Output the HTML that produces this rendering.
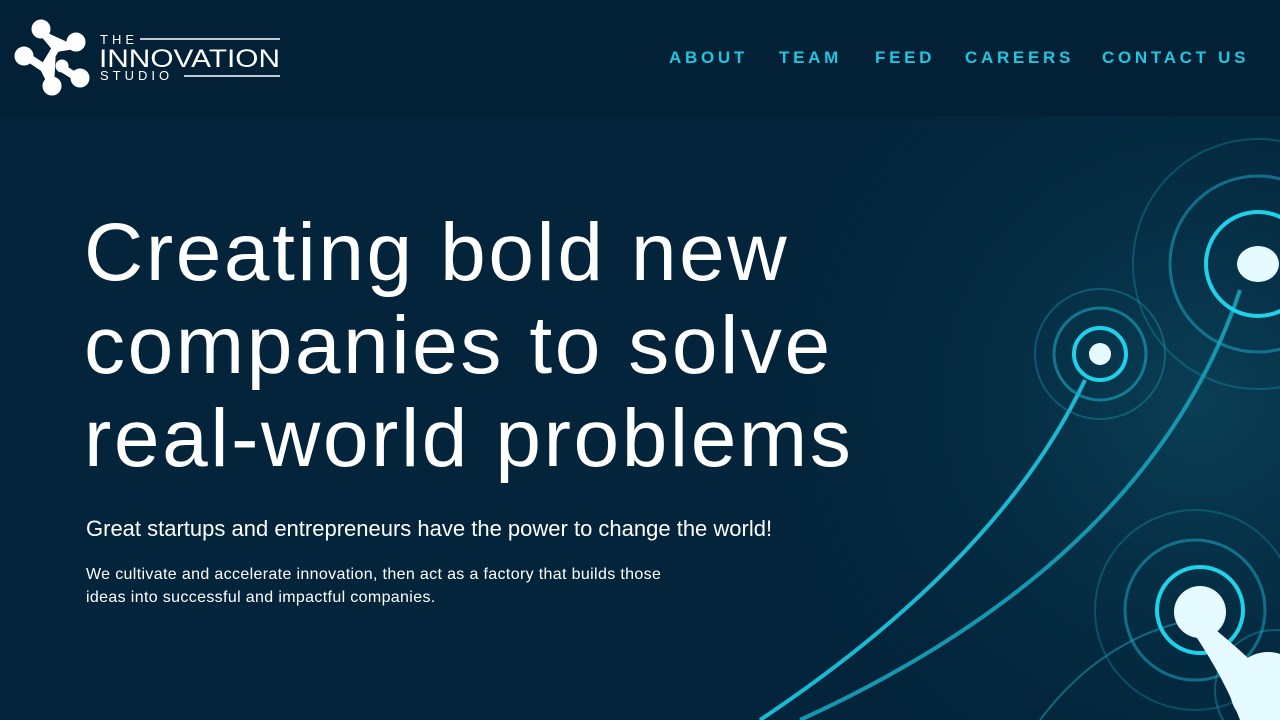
<!DOCTYPE html>
<html><head><meta charset="utf-8"><style>
*{margin:0;padding:0;box-sizing:border-box}
html,body{width:1280px;height:720px;overflow:hidden;background:#03243a;font-family:"Liberation Sans",sans-serif}
.hdr{position:absolute;left:0;top:0;width:1280px;height:116px;background:#022137}
.nav{position:absolute;top:48px;font-weight:bold;font-size:17px;letter-spacing:3.7px;color:#1fc6e0}
h1{position:absolute;left:84px;top:206px;font-weight:normal;font-size:82px;line-height:93px;color:#fff;letter-spacing:2.6px}
.sub{position:absolute;left:86px;top:516px;font-size:22px;color:#fff}
.p{position:absolute;left:86px;top:563px;font-size:16px;line-height:23px;color:#fff;width:640px;letter-spacing:0.35px}
svg{position:absolute}
</style></head><body>
<div class="hdr"></div>
<svg style="left:700px;top:116px" width="580" height="604" viewBox="700 116 580 604">
<defs>
<radialGradient id="g" cx="1200" cy="400" r="500" gradientUnits="userSpaceOnUse"><stop offset="0" stop-color="#0a3f56"/><stop offset="1" stop-color="#03243a" stop-opacity="0"/></radialGradient>
</defs>
<rect x="700" y="116" width="580" height="604" fill="url(#g)"/>
<g fill="none" stroke="#1aa8c2">
<path d="M760 720 Q1000 560 1085 380" stroke-width="4" stroke="#1ab9d4"/>
<path d="M800 720 Q1150 560 1240 290" stroke-width="4" stroke="#1597b0"/>
<path d="M1040 720 Q1100 640 1190 620" stroke-width="2" opacity=".5"/>
<circle cx="1100" cy="354" r="65" stroke-width="2" opacity=".35"/>
<circle cx="1100" cy="354" r="46" stroke-width="3" opacity=".6"/>
<circle cx="1100" cy="354" r="26" stroke-width="4" stroke="#1fd2ec"/>
<circle cx="1258" cy="264" r="125" stroke-width="2" opacity=".3"/>
<circle cx="1258" cy="264" r="88" stroke-width="3" opacity=".55"/>
<circle cx="1258" cy="264" r="52" stroke-width="4" stroke="#1fd2ec"/>
<circle cx="1195" cy="610" r="100" stroke-width="2" opacity=".3"/>
<circle cx="1195" cy="610" r="70" stroke-width="3" opacity=".55"/>
<circle cx="1200" cy="610" r="43" stroke-width="4" stroke="#1fd2ec"/>
<circle cx="1275" cy="690" r="60" stroke-width="2" opacity=".4"/>
</g>
<g fill="#e6fbff">
<circle cx="1100" cy="354" r="11"/>
<ellipse cx="1258" cy="264" rx="21" ry="18"/>
<circle cx="1200" cy="612" r="26"/>
<path d="M1210 625 Q1240 650 1250 660 L1280 720 L1240 720 Q1225 680 1195 635Z"/>
<circle cx="1268" cy="690" r="38"/>
</g>
</svg>
<svg style="left:14px;top:18px" width="270" height="80" viewBox="0 0 270 80">
<g fill="#fff" stroke="#fff" stroke-linecap="round">
<g stroke-width="8"><path d="M27 12 L42 30 L60 27 M42 30 L30 50 L40 70 M30 50 L12 38 M48 50 L64 60"/></g>
<circle cx="27" cy="11" r="9"/><circle cx="62" cy="24" r="9"/><circle cx="10" cy="38" r="9"/>
<circle cx="38" cy="68" r="9"/><circle cx="66" cy="60" r="9"/><circle cx="48" cy="48" r="6"/>
</g>
<text x="86" y="26" fill="#fff" font-family="Liberation Sans" font-size="13" letter-spacing="4">THE</text>
<line x1="126" y1="21" x2="266" y2="21" stroke="#fff" stroke-width="1.5"/>
<text x="85" y="49" fill="#fff" font-family="Liberation Sans" font-size="25" textLength="181" lengthAdjust="spacingAndGlyphs">INNOVATION</text>
<text x="86" y="62" fill="#fff" font-family="Liberation Sans" font-size="13" letter-spacing="4">STUDIO</text>
<line x1="170" y1="58" x2="266" y2="58" stroke="#fff" stroke-width="1.5"/>
</svg>
<div class="nav" style="left:669px">ABOUT</div>
<div class="nav" style="left:779px">TEAM</div>
<div class="nav" style="left:875px">FEED</div>
<div class="nav" style="left:965px">CAREERS</div>
<div class="nav" style="left:1102px">CONTACT US</div>
<h1>Creating bold new<br>companies to solve<br>real-world problems</h1>
<div class="sub">Great startups and entrepreneurs have the power to change the world!</div>
<div class="p">We cultivate and accelerate innovation, then act as a factory that builds those<br>ideas into successful and impactful companies.</div>
</body></html>
